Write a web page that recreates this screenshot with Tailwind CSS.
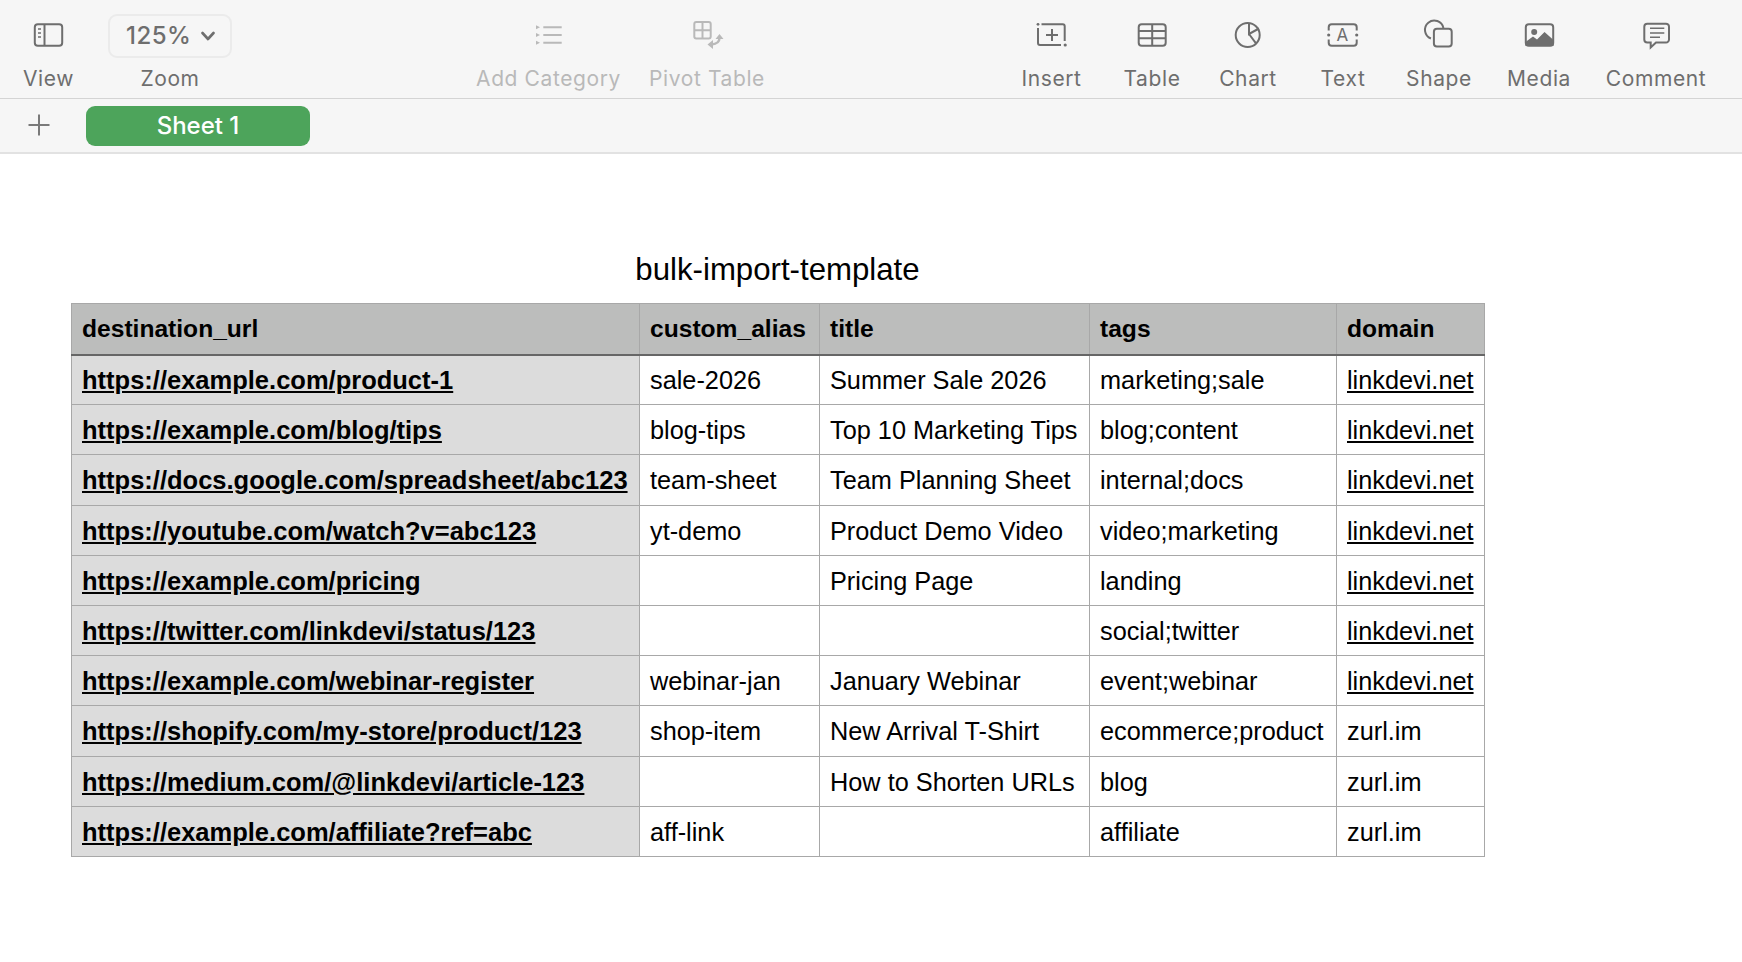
<!DOCTYPE html>
<html lang="en">
<head>
    <meta charset="UTF-8">
    <title>bulk-import-template</title>
    <script src="https://cdn.jsdelivr.net/npm/@tailwindcss/browser@4"></script>
</head>
<body class="bg-white h-screen overflow-hidden font-['Liberation_Sans',Arial,sans-serif] text-black">
    <!-- Toolbar -->
    <div class="h-[99px] flex bg-[#f6f6f6] border-b border-[#d4d4d4] font-['Inter',sans-serif] text-[21px] tracking-[0.6px] text-[#6e6e6e]">
        <div class="w-[97px] flex flex-col items-center">
            <svg class="mt-[15px] w-10 h-10" viewBox="28.5 15 40 40" fill="none" stroke="#6e6e6e" stroke-width="2">
                <rect x="34.3" y="24.3" width="27.4" height="21.4" rx="3"/>
                <path d="M44 24.3V45.7"/>
                <path d="M37.5 29h3M37.5 33h3M37.5 37h3" stroke-width="1.5"/>
            </svg>
            <span class="mt-[11px] leading-[26px]">View</span>
        </div>
        <div class="w-[146px] flex flex-col items-center">
            <div class="mt-[14px] w-[124px] h-[44px] border-2 border-[#ebebeb] rounded-[9px] flex items-center pl-4 text-[24px] font-medium tracking-[0.5px] leading-none">
                125%
                <svg class="ml-auto mr-[15px] w-[14px] h-[10px]" viewBox="0 0 14 10" fill="none" stroke="#6e6e6e" stroke-width="2.6" stroke-linecap="round" stroke-linejoin="round"><path d="M1.5 2 7 8l5.500-6"/></svg>
            </div>
            <span class="mt-[8px] leading-[26px]">Zoom</span>
        </div>
        <div class="ml-[225px] w-[161px] flex flex-col items-center text-[#b9b9b9]">
            <svg class="mt-[15px] w-10 h-10" viewBox="529 15 40 40" fill="none" stroke="#b9b9b9" stroke-width="2">
                <path d="M543.3 27.3h18.4M543.3 35h18.4M543.3 42.700h18.4"/>
                <path d="M536 25.3l4 2-4 2zM536 33l4 2-4 2zM536 40.700l4 2-4 2z" fill="#b9b9b9" stroke="none"/>
            </svg>
            <span class="mt-[11px] leading-[26px]">Add Category</span>
        </div>
        <div class="w-[156px] flex flex-col items-center text-[#b9b9b9]">
            <svg class="mt-[15px] w-10 h-10" viewBox="687 15 40 40" fill="none" stroke="#b9b9b9" stroke-width="2">
                <rect x="694.3" y="22" width="16.4" height="16.4" rx="2"/>
                <path d="M702.5 22v16.4M694.3 30.2h16.4"/>
                <path d="M719.5 38c0 4-3 6-8 6.5" stroke-width="2.4"/>
                <path d="M715.500 39l4-5 4 5zM713 40l-5.500 4.500 5.500 4.500z" fill="#b9b9b9" stroke="none"/>
            </svg>
            <span class="mt-[11px] leading-[26px]">Pivot Table</span>
        </div>
        <div class="ml-[216px] w-[101px] flex flex-col items-center">
            <svg class="mt-[15px] w-10 h-10" viewBox="1032 15 40 40" fill="none" stroke="#6e6e6e" stroke-width="2">
                <path d="M1041.5 24.3H1062.7a2 2 0 0 1 2 2V41"/>
                <path d="M1038 28V43a2 2 0 0 0 2 2H1061"/>
                <path d="M1046 35h12M1052 29v12"/>
                <circle cx="1038" cy="24.3" r="1.4" fill="#6e6e6e" stroke="none"/>
                <circle cx="1065.2" cy="45" r="1.6" fill="#6e6e6e" stroke="none"/>
            </svg>
            <span class="mt-[11px] leading-[26px]">Insert</span>
        </div>
        <div class="w-[100px] flex flex-col items-center">
            <svg class="mt-[15px] w-10 h-10" viewBox="1132 15 40 40" fill="none" stroke="#6e6e6e" stroke-width="2">
                <rect x="1138.7" y="24.3" width="27" height="21.4" rx="3"/>
                <path d="M1138.7 31H1165.7M1138.7 38.3H1165.7M1152.2 24.3V45.7"/>
            </svg>
            <span class="mt-[11px] leading-[26px]">Table</span>
        </div>
        <div class="w-[92px] flex flex-col items-center">
            <svg class="mt-[15px] w-10 h-10" viewBox="1228 15 40 40" fill="none" stroke="#6e6e6e" stroke-width="2">
                <circle cx="1247.7" cy="35" r="12"/>
                <path d="M1249 23.5V34L1259 28.5M1249 34L1256 43.3"/>
            </svg>
            <span class="mt-[11px] leading-[26px]">Chart</span>
        </div>
        <div class="w-[98px] flex flex-col items-center">
            <svg class="mt-[15px] w-10 h-10" viewBox="1324 15 40 40" fill="none" stroke="#6e6e6e" stroke-width="2">
                <path d="M1329.7 30.5V27.3a3 3 0 0 1 3-3H1354.7a3 3 0 0 1 3 3V30.5"/>
                <path d="M1329.7 39.5V42.7a3 3 0 0 0 3 3H1354.7a3 3 0 0 0 3-3V39.5"/>
                <circle cx="1329.7" cy="35" r="1.6" fill="#6e6e6e" stroke="none"/>
                <circle cx="1357.7" cy="35" r="1.6" fill="#6e6e6e" stroke="none"/>
                <text x="1343.7" y="41" text-anchor="middle" font-size="17" fill="#6e6e6e" stroke="none">A</text>
            </svg>
            <span class="mt-[11px] leading-[26px]">Text</span>
        </div>
        <div class="w-[94px] flex flex-col items-center">
            <svg class="mt-[15px] w-10 h-10" viewBox="1419.6 15 40 40" fill="none" stroke="#6e6e6e" stroke-width="2">
                <path d="M1431.5 38.5A9.3 9.3 0 1 1 1444 28"/>
                <rect x="1434.5" y="28.7" width="17.8" height="17.8" rx="3"/>
            </svg>
            <span class="mt-[11px] leading-[26px]">Shape</span>
        </div>
        <div class="w-[106px] flex flex-col items-center">
            <svg class="mt-[15px] w-10 h-10" viewBox="1519.5 15 40 40" fill="none" stroke="#6e6e6e" stroke-width="2">
                <rect x="1526.3" y="24.3" width="27.4" height="21.4" rx="3"/>
                <circle cx="1534.7" cy="32" r="3" fill="#6e6e6e" stroke="none"/>
                <path d="M1526 42L1533.5 36.5L1537.5 39.5L1545 32L1554 40V46H1526Z" fill="#6e6e6e" stroke="none"/>
            </svg>
            <span class="mt-[11px] leading-[26px]">Media</span>
        </div>
        <div class="w-[128px] flex flex-col items-center">
            <svg class="mt-[15px] w-10 h-10" viewBox="1636 15 40 40" fill="none" stroke="#6e6e6e" stroke-width="2">
                <path d="M1647.3 23.7H1666a3 3 0 0 1 3 3V39.5a3 3 0 0 1-3 3H1656L1650.7 47.5V42.5H1647.3a3 3 0 0 1-3-3V26.7a3 3 0 0 1 3-3Z"/>
                <path d="M1650 28.3h14.3M1650 33h14.3M1650 37.3h10" stroke-width="1.6"/>
            </svg>
            <span class="mt-[11px] leading-[26px]">Comment</span>
        </div>
    </div>

    <!-- Sheet tabs -->
    <div class="h-[55px] flex items-center bg-[#f6f6f6] border-b-2 border-[#e2e2e2]">
        <svg class="ml-[27px] mb-[2px] w-6 h-6" viewBox="0 0 24 24" fill="none" stroke="#7a7a7a" stroke-width="2"><path d="M12 1.5v21M1.5 12h21"/></svg>
        <div class="ml-[35px] w-[224px] h-10 rounded-[9px] bg-[#4da45b] text-white text-[24px] font-medium font-['Inter',sans-serif] flex items-center justify-center">Sheet 1</div>
    </div>

    <!-- Sheet canvas -->
    <div class="w-[1413px] ml-[71px]">
        <h1 class="mt-[100px] h-[49px] text-center text-[31.2px] leading-[32px] font-normal">bulk-import-template</h1>
        <table class="w-[1413px] table-fixed border-collapse text-[25.3px] leading-none [&_td]:px-[10px] [&_th]:px-[10px] [&_td]:pt-[2px] [&_th]:pt-[1px] [&_td]:border [&_th]:border [&_td]:border-[#a8a8a8] [&_th]:border-[#a8a8a8] [&_td]:whitespace-nowrap [&_a]:underline">
            <colgroup>
                <col class="w-[568px]">
                <col class="w-[180px]">
                <col class="w-[270px]">
                <col class="w-[247px]">
                <col class="w-[148px]">
            </colgroup>
            <thead>
                <tr class="h-[51px] bg-[#bcbdbc] text-left text-[24.6px] font-bold">
                    <th class="border-b-2! border-b-[#666666]!">destination_url</th>
                    <th class="border-b-2! border-b-[#666666]!">custom_alias</th>
                    <th class="border-b-2! border-b-[#666666]!">title</th>
                    <th class="border-b-2! border-b-[#666666]!">tags</th>
                    <th class="border-b-2! border-b-[#666666]!">domain</th>
                </tr>
            </thead>
            <tbody class="[&_td:first-child]:bg-[#dcdcdc] [&_td:first-child]:font-bold [&_td:first-child]:text-[25.5px]">
                <tr class="h-[50px]"><td><a href="#">https://example.com/product-1</a></td><td>sale-2026</td><td>Summer Sale 2026</td><td>marketing;sale</td><td><a href="#">linkdevi.net</a></td></tr>
                <tr class="h-[50px]"><td><a href="#">https://example.com/blog/tips</a></td><td>blog-tips</td><td>Top 10 Marketing Tips</td><td>blog;content</td><td><a href="#">linkdevi.net</a></td></tr>
                <tr class="h-[51px]"><td><a href="#">https://docs.google.com/spreadsheet/abc123</a></td><td>team-sheet</td><td>Team Planning Sheet</td><td>internal;docs</td><td><a href="#">linkdevi.net</a></td></tr>
                <tr class="h-[50px]"><td><a href="#">https://youtube.com/watch?v=abc123</a></td><td>yt-demo</td><td>Product Demo Video</td><td>video;marketing</td><td><a href="#">linkdevi.net</a></td></tr>
                <tr class="h-[50px]"><td><a href="#">https://example.com/pricing</a></td><td></td><td>Pricing Page</td><td>landing</td><td><a href="#">linkdevi.net</a></td></tr>
                <tr class="h-[50px]"><td><a href="#">https://twitter.com/linkdevi/status/123</a></td><td></td><td></td><td>social;twitter</td><td><a href="#">linkdevi.net</a></td></tr>
                <tr class="h-[50px]"><td><a href="#">https://example.com/webinar-register</a></td><td>webinar-jan</td><td>January Webinar</td><td>event;webinar</td><td><a href="#">linkdevi.net</a></td></tr>
                <tr class="h-[51px]"><td><a href="#">https://shopify.com/my-store/product/123</a></td><td>shop-item</td><td>New Arrival T-Shirt</td><td>ecommerce;product</td><td>zurl.im</td></tr>
                <tr class="h-[50px]"><td><a href="#">https://medium.com/@linkdevi/article-123</a></td><td></td><td>How to Shorten URLs</td><td>blog</td><td>zurl.im</td></tr>
                <tr class="h-[50px]"><td><a href="#">https://example.com/affiliate?ref=abc</a></td><td>aff-link</td><td></td><td>affiliate</td><td>zurl.im</td></tr>
            </tbody>
        </table>
    </div>
</body>
</html>
